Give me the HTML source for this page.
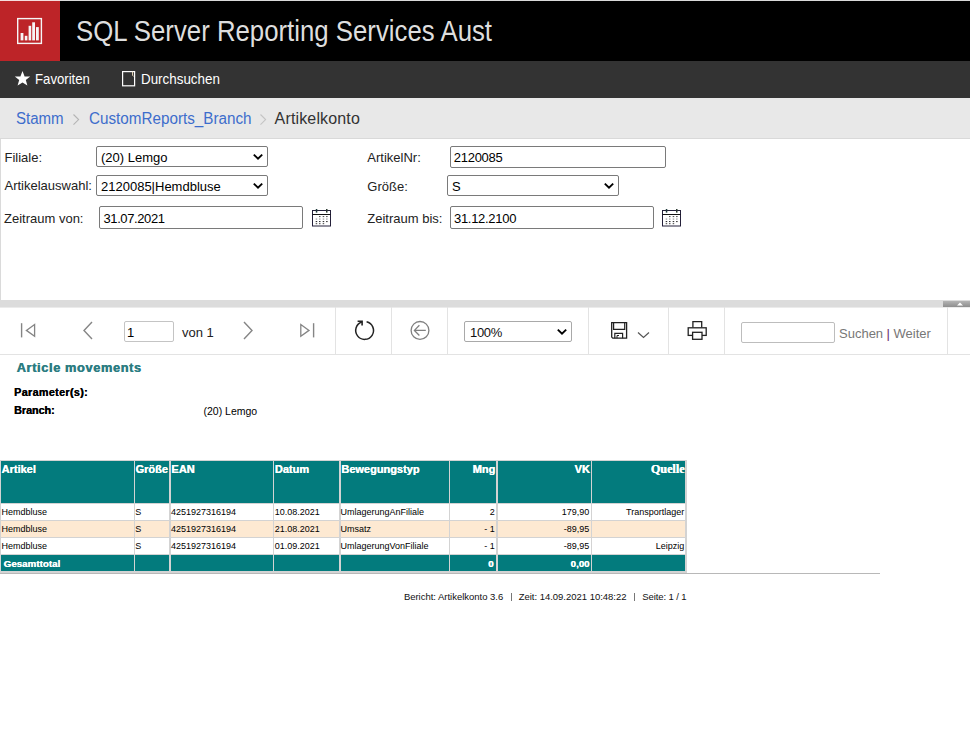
<!DOCTYPE html>
<html><head><meta charset="utf-8"><title>Artikelkonto</title>
<style>
html,body{margin:0;padding:0;background:#fff;width:970px;height:743px;overflow:hidden;position:relative;font-family:"Liberation Sans", sans-serif;}
.t{position:absolute;white-space:nowrap;line-height:1;}
.r{position:absolute;}
</style></head><body>
<div class="r" style="left:0px;top:0px;width:970px;height:61px;background:#000;"></div>
<div class="r" style="left:0px;top:0px;width:60px;height:61px;background:#bd2428;"></div>
<svg class="r" style="left:0;top:0" width="60" height="61" viewBox="0 0 60 61">
<rect x="17.7" y="18.6" width="23.7" height="24.8" fill="none" stroke="#f6f6f6" stroke-width="1.4"/>
<rect x="20.6" y="33" width="2.8" height="7.4" fill="#f6f6f6"/>
<rect x="24.8" y="35.8" width="2.6" height="4.6" fill="#f6f6f6"/>
<rect x="28.6" y="25.8" width="2.6" height="14.6" fill="#f6f6f6"/>
<rect x="32.2" y="22.3" width="2.8" height="18.1" fill="#f6f6f6"/>
<rect x="36" y="27.1" width="2.8" height="13.3" fill="#f6f6f6"/>
</svg>
<div class="t" style="left:76px;top:17.35px;font-size:29px;color:#dedede;transform:scaleX(0.889);transform-origin:0 0;">SQL Server Reporting Services Aust</div>
<div class="r" style="left:0px;top:0px;width:970px;height:1px;background:rgba(255,255,255,0.85);"></div>
<div class="r" style="left:0px;top:61px;width:970px;height:37px;background:#333333;"></div>
<svg class="r" style="left:14px;top:70px" width="17" height="17" viewBox="0 0 17 17">
<polygon points="8.5,1 10.6,6.4 16.2,6.6 11.8,10.1 13.4,15.6 8.5,12.4 3.6,15.6 5.2,10.1 0.8,6.6 6.4,6.4" fill="#fff"/>
</svg>
<div class="t" style="left:34.8px;top:72.06px;font-size:14.1px;color:#fff;transform:scaleX(0.935);transform-origin:0 0;">Favoriten</div>
<svg class="r" style="left:121px;top:70px" width="16" height="17" viewBox="0 0 16 17"><rect x="1.6" y="1.6" width="12" height="14.2" fill="none" stroke="#fff" stroke-width="1.2"/><path d="M11.6 1.6 V5.5 L12.6 6.2" fill="none" stroke="#f0e0c0" stroke-width="1"/></svg>
<div class="t" style="left:140.8px;top:72.06px;font-size:14.1px;color:#fff;transform:scaleX(0.95);transform-origin:0 0;">Durchsuchen</div>
<div class="r" style="left:0px;top:98px;width:970px;height:40px;background:#e8e8e8;"></div>
<div class="r" style="left:0px;top:138px;width:970px;height:1px;background:#d9d9d9;"></div>
<div class="t" style="left:16.3px;top:111.26px;font-size:16px;color:#3d6dcc;transform:scaleX(0.94);transform-origin:0 0;">Stamm</div>
<svg class="r" style="left:72px;top:113px" width="9" height="13" viewBox="0 0 9 13"><path d="M1.5 1.5 L6.6 6.6 L1.5 11.7" fill="none" stroke="#b4b4b4" stroke-width="1.1"/></svg>
<div class="t" style="left:88.5px;top:111.26px;font-size:16px;color:#3d6dcc;transform:scaleX(0.952);transform-origin:0 0;">CustomReports_Branch</div>
<svg class="r" style="left:259px;top:113px" width="9" height="13" viewBox="0 0 9 13"><path d="M1.5 1.5 L6.6 6.6 L1.5 11.7" fill="none" stroke="#c4c4c4" stroke-width="1.1"/></svg>
<div class="t" style="left:274.6px;top:111.26px;font-size:16px;color:#333;letter-spacing:0.15px;">Artikelkonto</div>
<div class="r" style="left:0px;top:139px;width:970px;height:161px;background:#fff;border-left:1px solid #dadada;box-sizing:border-box;"></div>
<div class="t" style="left:4.5px;top:150.80px;font-size:13px;color:#222;">Filiale:</div>
<div class="t" style="left:4.5px;top:179.30px;font-size:13px;color:#222;">Artikelauswahl:</div>
<div class="t" style="left:4px;top:211.60px;font-size:13px;color:#222;">Zeitraum von:</div>
<div class="t" style="left:367.3px;top:151.00px;font-size:13px;color:#222;">ArtikelNr:</div>
<div class="t" style="left:367.3px;top:180.00px;font-size:13px;color:#222;">Größe:</div>
<div class="t" style="left:367.3px;top:211.80px;font-size:13px;color:#222;">Zeitraum bis:</div>
<div class="r" style="left:96px;top:146px;width:171.5px;height:21px;border:1px solid #7a7a7a;border-radius:2px;box-sizing:border-box;background:#fff;"></div>
<svg class="r" style="left:252.3px;top:152.8px" width="12" height="8" viewBox="0 0 12 8"><path d="M1.8 1.6 L6 5.6 L10.2 1.6" fill="none" stroke="#000" stroke-width="1.9"/></svg>
<div class="t" style="left:101px;top:151.00px;font-size:13px;color:#000;">(20) Lemgo</div>
<div class="r" style="left:96px;top:175px;width:171.5px;height:21px;border:1px solid #7a7a7a;border-radius:2px;box-sizing:border-box;background:#fff;"></div>
<svg class="r" style="left:252.3px;top:181.8px" width="12" height="8" viewBox="0 0 12 8"><path d="M1.8 1.6 L6 5.6 L10.2 1.6" fill="none" stroke="#000" stroke-width="1.9"/></svg>
<div class="t" style="left:101px;top:180.00px;font-size:13px;color:#000;">2120085|Hemdbluse</div>
<div class="r" style="left:99px;top:206px;width:204px;height:23px;border:1px solid #7a7a7a;border-radius:2px;box-sizing:border-box;background:#fff;"></div>
<div class="t" style="left:103.5px;top:211.80px;font-size:13px;color:#000;letter-spacing:-0.4px;">31.07.2021</div>
<svg class="r" style="left:311px;top:208px" width="22" height="20" viewBox="0 0 22 20"><rect x="1.5" y="2.5" width="18" height="15.5" fill="#fff" stroke="#24203a" stroke-width="1"/><path d="M1.5 6.5 H19.5" stroke="#111" stroke-width="1"/><rect x="4.8" y="1" width="1.5" height="3.6" fill="#1f3a3a"/><rect x="15" y="1" width="1.5" height="3.6" fill="#2a3a30"/><rect x="8.0" y="8.0" width="1.5" height="1.1" fill="#555"/><rect x="11.7" y="8.0" width="1.5" height="1.1" fill="#555"/><rect x="15.1" y="8.0" width="1.5" height="1.1" fill="#555"/><rect x="4.7" y="10.5" width="1.5" height="1.1" fill="#9a9a9a"/><rect x="8.0" y="10.5" width="1.5" height="1.1" fill="#9a9a9a"/><rect x="11.7" y="10.5" width="1.5" height="1.1" fill="#9a9a9a"/><rect x="15.1" y="10.5" width="1.5" height="1.1" fill="#9a9a9a"/><rect x="4.7" y="13.0" width="1.5" height="1.1" fill="#333"/><rect x="8.0" y="13.0" width="1.5" height="1.1" fill="#333"/><rect x="11.7" y="13.0" width="1.5" height="1.1" fill="#333"/><rect x="15.1" y="13.0" width="1.5" height="1.1" fill="#333"/><rect x="4.7" y="15.1" width="1.5" height="1.1" fill="#555"/><rect x="8.0" y="15.1" width="1.5" height="1.1" fill="#555"/><rect x="11.7" y="15.1" width="1.5" height="1.1" fill="#555"/></svg>
<div class="r" style="left:450px;top:145.5px;width:216px;height:22px;border:1px solid #7a7a7a;border-radius:2px;box-sizing:border-box;background:#fff;"></div>
<div class="t" style="left:453.7px;top:151.00px;font-size:13px;color:#000;letter-spacing:-0.25px;">2120085</div>
<div class="r" style="left:447px;top:175px;width:171.5px;height:21px;border:1px solid #7a7a7a;border-radius:2px;box-sizing:border-box;background:#fff;"></div>
<svg class="r" style="left:603.3px;top:181.8px" width="12" height="8" viewBox="0 0 12 8"><path d="M1.8 1.6 L6 5.6 L10.2 1.6" fill="none" stroke="#000" stroke-width="1.9"/></svg>
<div class="t" style="left:452px;top:180.00px;font-size:13px;color:#000;">S</div>
<div class="r" style="left:450px;top:206px;width:204px;height:23px;border:1px solid #7a7a7a;border-radius:2px;box-sizing:border-box;background:#fff;"></div>
<div class="t" style="left:454px;top:212.20px;font-size:13px;color:#000;letter-spacing:-0.3px;">31.12.2100</div>
<svg class="r" style="left:661px;top:208px" width="22" height="20" viewBox="0 0 22 20"><rect x="1.5" y="2.5" width="18" height="15.5" fill="#fff" stroke="#24203a" stroke-width="1"/><path d="M1.5 6.5 H19.5" stroke="#111" stroke-width="1"/><rect x="4.8" y="1" width="1.5" height="3.6" fill="#1f3a3a"/><rect x="15" y="1" width="1.5" height="3.6" fill="#2a3a30"/><rect x="8.0" y="8.0" width="1.5" height="1.1" fill="#555"/><rect x="11.7" y="8.0" width="1.5" height="1.1" fill="#555"/><rect x="15.1" y="8.0" width="1.5" height="1.1" fill="#555"/><rect x="4.7" y="10.5" width="1.5" height="1.1" fill="#9a9a9a"/><rect x="8.0" y="10.5" width="1.5" height="1.1" fill="#9a9a9a"/><rect x="11.7" y="10.5" width="1.5" height="1.1" fill="#9a9a9a"/><rect x="15.1" y="10.5" width="1.5" height="1.1" fill="#9a9a9a"/><rect x="4.7" y="13.0" width="1.5" height="1.1" fill="#333"/><rect x="8.0" y="13.0" width="1.5" height="1.1" fill="#333"/><rect x="11.7" y="13.0" width="1.5" height="1.1" fill="#333"/><rect x="15.1" y="13.0" width="1.5" height="1.1" fill="#333"/><rect x="4.7" y="15.1" width="1.5" height="1.1" fill="#555"/><rect x="8.0" y="15.1" width="1.5" height="1.1" fill="#555"/><rect x="11.7" y="15.1" width="1.5" height="1.1" fill="#555"/></svg>
<div class="r" style="left:0px;top:300px;width:970px;height:7px;background:#dcdcdc;"></div>
<div class="r" style="left:0px;top:307px;width:970px;height:1px;background:#ebebeb;"></div>
<div class="r" style="left:943px;top:301px;width:27px;height:6px;background:linear-gradient(#b4b4b4,#8e8e8e);"></div>
<svg class="r" style="left:955px;top:301px" width="10" height="5" viewBox="0 0 10 5"><polygon points="2,4.5 5,1.5 8,4.5" fill="#fff"/></svg>
<div class="r" style="left:0px;top:354px;width:970px;height:1px;background:#e3e3e3;"></div>
<div class="r" style="left:335px;top:307px;width:1px;height:47px;background:#e3e3e3;"></div>
<div class="r" style="left:391px;top:307px;width:1px;height:47px;background:#e3e3e3;"></div>
<div class="r" style="left:447px;top:307px;width:1px;height:47px;background:#e3e3e3;"></div>
<div class="r" style="left:588px;top:307px;width:1px;height:47px;background:#e3e3e3;"></div>
<div class="r" style="left:668px;top:307px;width:1px;height:47px;background:#e3e3e3;"></div>
<div class="r" style="left:724px;top:307px;width:1px;height:47px;background:#e3e3e3;"></div>
<div class="r" style="left:947px;top:307px;width:1px;height:47px;background:#e3e3e3;"></div>
<svg class="r" style="left:18px;top:320px" width="22" height="20" viewBox="0 0 22 20"><path d="M3.6 3.2 V17.4" stroke="#858585" stroke-width="1.4"/><path d="M16.6 4.5 L8.4 10.4 L16.6 16.3 Z" fill="none" stroke="#858585" stroke-width="1.3" stroke-linejoin="miter"/></svg>
<svg class="r" style="left:80px;top:320px" width="16" height="20" viewBox="0 0 16 20"><path d="M12 2 L4 10.5 L12 19" fill="none" stroke="#858585" stroke-width="1.4"/></svg>
<div class="r" style="left:124px;top:321px;width:50px;height:21px;border:1px solid #c4c4c4;border-radius:2px;box-sizing:border-box;background:#fff;"></div>
<div class="t" style="left:127px;top:326.00px;font-size:13px;color:#000;">1</div>
<div class="t" style="left:182px;top:325.70px;font-size:13px;color:#222;">von 1</div>
<svg class="r" style="left:240px;top:320px" width="16" height="20" viewBox="0 0 16 20"><path d="M4 2 L12 10.5 L4 19" fill="none" stroke="#858585" stroke-width="1.4"/></svg>
<svg class="r" style="left:297px;top:320px" width="22" height="20" viewBox="0 0 22 20"><path d="M16.6 3.2 V17.4" stroke="#858585" stroke-width="1.4"/><path d="M3.8 4.5 L12 10.4 L3.8 16.3 Z" fill="none" stroke="#858585" stroke-width="1.3"/></svg>
<svg class="r" style="left:352px;top:319px" width="24" height="23" viewBox="0 0 24 23"><path d="M14.6 2.8 A8.9 8.9 0 1 1 9.9 3.0" fill="none" stroke="#222" stroke-width="1.5"/><path d="M5.6 2.3 H10.1 V6.6" fill="none" stroke="#222" stroke-width="1.6"/></svg>
<svg class="r" style="left:409px;top:319px" width="23" height="23" viewBox="0 0 23 23"><circle cx="11" cy="11.4" r="8.9" fill="none" stroke="#808080" stroke-width="1.3"/><path d="M10.4 6.3 L5.4 11.4 L10.4 16.5 M5.4 11.4 H16.8" fill="none" stroke="#808080" stroke-width="1.3"/></svg>
<div class="r" style="left:464px;top:321px;width:108px;height:21px;border:1px solid #a9a9a9;border-radius:2px;box-sizing:border-box;background:#fff;"></div>
<svg class="r" style="left:556px;top:327.8px" width="12" height="8" viewBox="0 0 12 8"><path d="M1.8 1.6 L6 5.6 L10.2 1.6" fill="none" stroke="#000" stroke-width="1.9"/></svg>
<div class="t" style="left:470px;top:326.00px;font-size:13px;color:#111;letter-spacing:-0.3px;">100%</div>
<svg class="r" style="left:610px;top:321px" width="20" height="19" viewBox="0 0 20 19"><path d="M1.7 1.7 H16.6 V17.2 H2.8 L1.7 16.1 Z" fill="none" stroke="#222" stroke-width="1.3"/><path d="M3.6 1.7 V8.3 H14.7 V1.7" fill="none" stroke="#222" stroke-width="1.2"/><path d="M4.8 17.2 V12.3 H12.6 V17.2" fill="none" stroke="#222" stroke-width="1.2"/><path d="M7 17.2 V14.5 H9" fill="none" stroke="#222" stroke-width="1"/></svg>
<svg class="r" style="left:637px;top:330.7px" width="13" height="8" viewBox="0 0 13 8"><path d="M1 1.5 L6.5 6.5 L12 1.5" fill="none" stroke="#555" stroke-width="1.2"/></svg>
<svg class="r" style="left:686px;top:320px" width="22" height="21" viewBox="0 0 22 21"><path d="M6.9 7.6 V1.7 H15.7 V7.6" fill="none" stroke="#222" stroke-width="1.3"/><rect x="2.2" y="7.8" width="18" height="7.6" fill="none" stroke="#222" stroke-width="1.3"/><rect x="6.6" y="12.3" width="9.4" height="7" fill="#fff" stroke="#222" stroke-width="1.3"/></svg>
<div class="r" style="left:741px;top:322px;width:94px;height:21px;border:1px solid #bdbdbd;border-radius:2px;box-sizing:border-box;"></div>
<div class="t" style="left:839px;top:327.00px;font-size:13px;color:#777;">Suchen</div>
<div class="t" style="left:886.5px;top:327.00px;font-size:13px;color:#6a2a6a;">|</div>
<div class="t" style="left:893.5px;top:327.00px;font-size:13px;color:#777;">Weiter</div>
<div class="t" style="left:16.5px;top:361.76px;font-size:12.8px;color:#2c7d82;font-weight:bold;letter-spacing:0.62px;text-shadow:0.45px 0 0 #2c7d82;">Article movements</div>
<div class="t" style="left:14px;top:386.66px;font-size:10.8px;color:#000;font-weight:bold;letter-spacing:0.33px;text-shadow:0.35px 0 0 #000;">Parameter(s):</div>
<div class="t" style="left:14px;top:405.36px;font-size:10.8px;color:#000;font-weight:bold;letter-spacing:-0.05px;text-shadow:0.35px 0 0 #000;">Branch:</div>
<div class="t" style="left:203.5px;top:405.51px;font-size:10.5px;color:#000;">(20) Lemgo</div>
<div class="r" style="left:0px;top:460px;width:687px;height:113px;background:#d3d3d3;"></div>
<div class="r" style="left:1px;top:461px;width:133px;height:42px;background:#037b7d;"></div>
<div class="r" style="left:135px;top:461px;width:34px;height:42px;background:#037b7d;"></div>
<div class="r" style="left:171px;top:461px;width:102px;height:42px;background:#037b7d;"></div>
<div class="r" style="left:274px;top:461px;width:65px;height:42px;background:#037b7d;"></div>
<div class="r" style="left:341px;top:461px;width:108px;height:42px;background:#037b7d;"></div>
<div class="r" style="left:450px;top:461px;width:46px;height:42px;background:#037b7d;"></div>
<div class="r" style="left:498px;top:461px;width:93px;height:42px;background:#037b7d;"></div>
<div class="r" style="left:592px;top:461px;width:93px;height:42px;background:#037b7d;"></div>
<div class="r" style="left:1px;top:504px;width:133px;height:16px;background:#fff;"></div>
<div class="r" style="left:135px;top:504px;width:34px;height:16px;background:#fff;"></div>
<div class="r" style="left:171px;top:504px;width:102px;height:16px;background:#fff;"></div>
<div class="r" style="left:274px;top:504px;width:65px;height:16px;background:#fff;"></div>
<div class="r" style="left:341px;top:504px;width:108px;height:16px;background:#fff;"></div>
<div class="r" style="left:450px;top:504px;width:46px;height:16px;background:#fff;"></div>
<div class="r" style="left:498px;top:504px;width:93px;height:16px;background:#fff;"></div>
<div class="r" style="left:592px;top:504px;width:93px;height:16px;background:#fff;"></div>
<div class="r" style="left:1px;top:521px;width:133px;height:16px;background:#fde9d2;"></div>
<div class="r" style="left:135px;top:521px;width:34px;height:16px;background:#fde9d2;"></div>
<div class="r" style="left:171px;top:521px;width:102px;height:16px;background:#fde9d2;"></div>
<div class="r" style="left:274px;top:521px;width:65px;height:16px;background:#fde9d2;"></div>
<div class="r" style="left:341px;top:521px;width:108px;height:16px;background:#fde9d2;"></div>
<div class="r" style="left:450px;top:521px;width:46px;height:16px;background:#fde9d2;"></div>
<div class="r" style="left:498px;top:521px;width:93px;height:16px;background:#fde9d2;"></div>
<div class="r" style="left:592px;top:521px;width:93px;height:16px;background:#fde9d2;"></div>
<div class="r" style="left:1px;top:538px;width:133px;height:16px;background:#fff;"></div>
<div class="r" style="left:135px;top:538px;width:34px;height:16px;background:#fff;"></div>
<div class="r" style="left:171px;top:538px;width:102px;height:16px;background:#fff;"></div>
<div class="r" style="left:274px;top:538px;width:65px;height:16px;background:#fff;"></div>
<div class="r" style="left:341px;top:538px;width:108px;height:16px;background:#fff;"></div>
<div class="r" style="left:450px;top:538px;width:46px;height:16px;background:#fff;"></div>
<div class="r" style="left:498px;top:538px;width:93px;height:16px;background:#fff;"></div>
<div class="r" style="left:592px;top:538px;width:93px;height:16px;background:#fff;"></div>
<div class="r" style="left:1px;top:555px;width:133px;height:16px;background:#037b7d;"></div>
<div class="r" style="left:135px;top:555px;width:34px;height:16px;background:#037b7d;"></div>
<div class="r" style="left:171px;top:555px;width:102px;height:16px;background:#037b7d;"></div>
<div class="r" style="left:274px;top:555px;width:65px;height:16px;background:#037b7d;"></div>
<div class="r" style="left:341px;top:555px;width:108px;height:16px;background:#037b7d;"></div>
<div class="r" style="left:450px;top:555px;width:46px;height:16px;background:#037b7d;"></div>
<div class="r" style="left:498px;top:555px;width:93px;height:16px;background:#037b7d;"></div>
<div class="r" style="left:592px;top:555px;width:93px;height:16px;background:#037b7d;"></div>
<div class="t" style="left:1.5px;top:463.89px;font-size:11px;color:#fff;font-weight:bold;text-shadow:0.3px 0 0 #fff;">Artikel</div>
<div class="t" style="left:135.4px;top:463.89px;font-size:11px;color:#fff;font-weight:bold;text-shadow:0.3px 0 0 #fff;">Größe</div>
<div class="t" style="left:171.3px;top:463.89px;font-size:11px;color:#fff;font-weight:bold;text-shadow:0.3px 0 0 #fff;">EAN</div>
<div class="t" style="left:274.7px;top:463.89px;font-size:11px;color:#fff;font-weight:bold;text-shadow:0.3px 0 0 #fff;">Datum</div>
<div class="t" style="left:341.2px;top:463.89px;font-size:11px;color:#fff;font-weight:bold;text-shadow:0.3px 0 0 #fff;">Bewegungstyp</div>
<div class="t" style="right:474.8px;top:463.89px;font-size:11px;color:#fff;text-align:right;font-weight:bold;text-shadow:0.3px 0 0 #fff;">Mng</div>
<div class="t" style="right:380.20000000000005px;top:463.89px;font-size:11px;color:#fff;text-align:right;font-weight:bold;text-shadow:0.3px 0 0 #fff;">VK</div>
<div class="t" style="right:285.5px;top:462.87px;font-size:12.2px;color:#fff;text-align:right;font-weight:bold;font-family:'Liberation Serif', serif;text-shadow:0.3px 0 0 #fff;">Quelle</div>
<div class="t" style="left:1.5px;top:507.78px;font-size:9px;color:#000;">Hemdbluse</div>
<div class="t" style="left:135.2px;top:507.78px;font-size:9px;color:#000;">S</div>
<div class="t" style="left:170.9px;top:507.78px;font-size:9px;color:#000;">4251927316194</div>
<div class="t" style="left:274.7px;top:507.78px;font-size:9px;color:#000;">10.08.2021</div>
<div class="t" style="left:340.4px;top:507.78px;font-size:9px;color:#000;">UmlagerungAnFiliale</div>
<div class="t" style="right:475.3px;top:507.78px;font-size:9px;color:#000;text-align:right;">2</div>
<div class="t" style="right:380.70000000000005px;top:507.78px;font-size:9px;color:#000;text-align:right;">179,90</div>
<div class="t" style="right:285.70000000000005px;top:507.78px;font-size:9px;color:#000;text-align:right;">Transportlager</div>
<div class="t" style="left:1.5px;top:524.98px;font-size:9px;color:#000;">Hemdbluse</div>
<div class="t" style="left:135.2px;top:524.98px;font-size:9px;color:#000;">S</div>
<div class="t" style="left:170.9px;top:524.98px;font-size:9px;color:#000;">4251927316194</div>
<div class="t" style="left:274.7px;top:524.98px;font-size:9px;color:#000;">21.08.2021</div>
<div class="t" style="left:340.4px;top:524.98px;font-size:9px;color:#000;">Umsatz</div>
<div class="t" style="right:475.3px;top:524.98px;font-size:9px;color:#000;text-align:right;">- 1</div>
<div class="t" style="right:380.70000000000005px;top:524.98px;font-size:9px;color:#000;text-align:right;">-89,95</div>
<div class="t" style="left:1.5px;top:541.88px;font-size:9px;color:#000;">Hemdbluse</div>
<div class="t" style="left:135.2px;top:541.88px;font-size:9px;color:#000;">S</div>
<div class="t" style="left:170.9px;top:541.88px;font-size:9px;color:#000;">4251927316194</div>
<div class="t" style="left:274.7px;top:541.88px;font-size:9px;color:#000;">01.09.2021</div>
<div class="t" style="left:340.4px;top:541.88px;font-size:9px;color:#000;">UmlagerungVonFiliale</div>
<div class="t" style="right:475.3px;top:541.88px;font-size:9px;color:#000;text-align:right;">- 1</div>
<div class="t" style="right:380.70000000000005px;top:541.88px;font-size:9px;color:#000;text-align:right;">-89,95</div>
<div class="t" style="right:285.70000000000005px;top:541.88px;font-size:9px;color:#000;text-align:right;">Leipzig</div>
<div class="t" style="left:3.6px;top:558.99px;font-size:9.7px;color:#fff;font-weight:bold;letter-spacing:0.05px;text-shadow:0.3px 0 0 #fff;">Gesamttotal</div>
<div class="t" style="right:476.5px;top:558.99px;font-size:9.7px;color:#fff;text-align:right;font-weight:bold;text-shadow:0.3px 0 0 #fff;">0</div>
<div class="t" style="right:380.6px;top:558.99px;font-size:9.7px;color:#fff;text-align:right;font-weight:bold;text-shadow:0.3px 0 0 #fff;">0,00</div>
<div class="r" style="left:0px;top:573px;width:880px;height:1px;background:#b8b8b8;"></div>
<div class="t" style="left:403.9px;top:592.46px;font-size:9.5px;color:#111;letter-spacing:-0.02px;">Bericht: Artikelkonto 3.6</div>
<div class="r" style="left:511px;top:593px;width:1px;height:8px;background:#777;"></div>
<div class="t" style="left:518.7px;top:592.46px;font-size:9.5px;color:#111;letter-spacing:-0.02px;">Zeit: 14.09.2021 10:48:22</div>
<div class="r" style="left:634px;top:593px;width:1px;height:8px;background:#777;"></div>
<div class="t" style="left:642.3px;top:592.46px;font-size:9.5px;color:#111;letter-spacing:-0.1px;">Seite: 1 / 1</div>

</body></html>
